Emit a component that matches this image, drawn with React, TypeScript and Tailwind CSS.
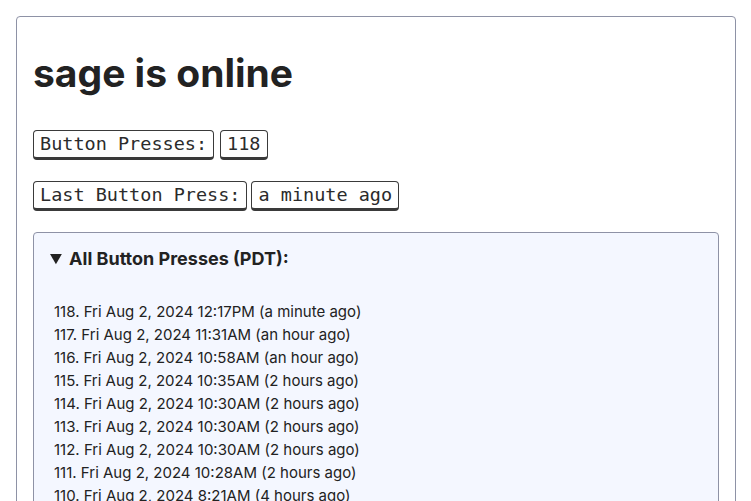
const presses = [
  "118. Fri Aug 2, 2024 12:17PM (a minute ago)",
  "117. Fri Aug 2, 2024 11:31AM (an hour ago)",
  "116. Fri Aug 2, 2024 10:58AM (an hour ago)",
  "115. Fri Aug 2, 2024 10:35AM (2 hours ago)",
  "114. Fri Aug 2, 2024 10:30AM (2 hours ago)",
  "113. Fri Aug 2, 2024 10:30AM (2 hours ago)",
  "112. Fri Aug 2, 2024 10:30AM (2 hours ago)",
  "111. Fri Aug 2, 2024 10:28AM (2 hours ago)",
  "110. Fri Aug 2, 2024 8:21AM (4 hours ago)",
  "109. Fri Aug 2, 2024 8:20AM (4 hours ago)",
  "108. Fri Aug 2, 2024 8:02AM (4 hours ago)",
];

function Kbd({ children }: { children: React.ReactNode }) {
  return (
    <kbd className="inline-block px-[6px] py-[2px] border border-[#3a3a3a] border-b-[3px] rounded-[4px] text-[18.5px] leading-[22px] text-[#2b2b2b] font-['DejaVu_Sans_Mono',monospace] bg-white">
      {children}
    </kbd>
  );
}

export default function App() {
  return (
    <div className="bg-white min-h-screen p-4 font-['Inter',sans-serif] text-[#222]">
      <div className="w-[720px] border border-[#8e92a6] rounded-[4px] px-4 pt-[32px] pb-6">
        <h1 className="text-[39px] leading-[48px] font-bold mb-[33px]">sage is online</h1>

        <div className="flex gap-[6px] mb-[21px]">
          <Kbd>Button Presses:</Kbd>
          <Kbd>118</Kbd>
        </div>
        <div className="flex gap-[4px] mb-[21px]">
          <Kbd>Last Button Press:</Kbd>
          <Kbd>a minute ago</Kbd>
        </div>

        <details open className="bg-[#f4f7ff] border border-[#8e92a6] rounded-[4px] px-4 pt-[14px] pb-4">
          <summary className="text-[18px] leading-[24px] font-bold cursor-pointer mb-[29px]">
            All Button Presses (PDT):
          </summary>
          <div className="pl-[4px] text-[15px] leading-[23px]">
            {presses.map((p) => (
              <div key={p}>{p}</div>
            ))}
          </div>
        </details>
      </div>
    </div>
  );
}
